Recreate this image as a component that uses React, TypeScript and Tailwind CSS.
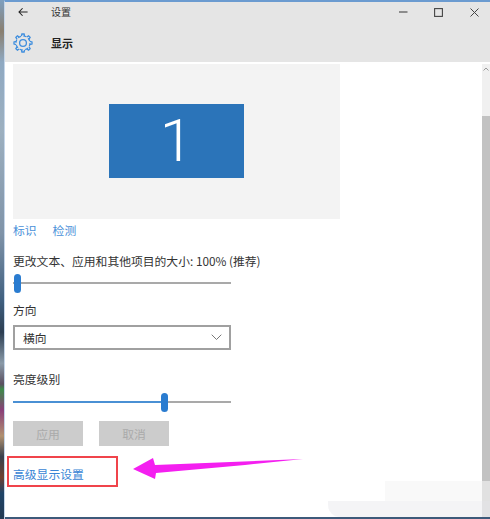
import React from "react";

const font = { fontFamily: '"Noto Sans CJK SC","Liberation Sans",sans-serif' };

function Gear() {
  const teeth = [0, 45, 90, 135, 180, 225, 270, 315];
  return (
    <svg width="20" height="20" viewBox="0 0 20 20" fill="none" stroke="#3f8ede" strokeWidth="1.3">
      <circle cx="10" cy="10" r="3.4" />
      <circle cx="10" cy="10" r="7" strokeDasharray="3.2 2.3" strokeWidth="1.2" />
      {teeth.map((a) => (
        <path key={a} d="M8.4 3.2 L8.9 1 H11.1 L11.6 3.2" transform={`rotate(${a} 10 10)`} />
      ))}
    </svg>
  );
}

function Slider({ pct, active }: { pct: number; active?: boolean }) {
  return (
    <div className="relative h-[18px] w-[218px] flex items-center">
      <div className="h-[2px] w-full bg-[#a9a9a9]" />
      {active && <div className="absolute left-0 h-[2px] bg-[#4a90d4]" style={{ width: `${pct}%` }} />}
      <div
        className="absolute h-[19px] w-[7px] rounded-full bg-[#2a7cd0]"
        style={{ left: `${pct}%`, marginLeft: active ? -3 : 1 }}
      />
    </div>
  );
}

export default function App() {
  return (
    <div className="relative h-[519px] w-[490px] overflow-hidden bg-white flex" style={font}>
      <div className="w-[4px] shrink-0 bg-[linear-gradient(180deg,#7fa0c0_0%,#8a7f70_6%,#8fa9c2_12%,#9db0c0_25%,#7f93a8_45%,#3f5f7f_58%,#2c3e52_64%,#8a9aa8_70%,#5a4f60_74%,#3d8a4a_75%,#8a3f78_79%,#b09070_84%,#38404c_88%,#704030_92%,#1f4468_95%,#233a52_100%)]" />
      <div className="flex-1 min-w-0 flex flex-col border-l border-[#c5d6ea] border-t-2 border-t-[#6b9bd0]">
        <header className="h-[60px] shrink-0 bg-[#e5e5e5] flex flex-col">
          <div className="h-[20px] flex items-center text-[#333]">
            <svg className="ml-[13px]" width="10" height="10" viewBox="0 0 12 12" fill="none" stroke="#222" strokeWidth="1.3">
              <path d="M11.5 6H1.2M5.5 1.5 1.2 6l4.3 4.5" />
            </svg>
            <span className="ml-[23px] text-[10px] leading-none">设置</span>
            <div className="ml-auto flex items-center">
              <svg width="10" height="10" viewBox="0 0 10 10" stroke="#444" strokeWidth="1.1"><path d="M1 5h8.5" /></svg>
              <svg className="ml-[26px]" width="9" height="9" viewBox="0 0 9 9" fill="none" stroke="#444" strokeWidth="1.1"><rect x=".6" y=".6" width="7.8" height="7.8" /></svg>
              <svg className="ml-[27px] mr-[11px]" width="9" height="9" viewBox="0 0 9 9" stroke="#444" strokeWidth="1"><path d="M.5.5l8 8M8.5.5l-8 8" /></svg>
            </div>
          </div>
          <div className="flex items-center h-[40px] pt-[2px]">
            <div className="ml-[8px]"><Gear /></div>
            <span className="ml-[18px] text-[11px] font-bold leading-none text-[#222]">显示</span>
          </div>
        </header>
        <div className="h-[2px] bg-white" />
        <div className="relative flex-1 flex flex-col pl-[8px]">
          <div className="h-[155px] w-[327px] bg-[#f3f3f3] flex items-start pt-[40px] pl-[96px]">
            <div className="h-[74px] w-[135px] bg-[#2b74b9] flex items-center justify-center text-[60px] leading-none text-white" style={{ fontFamily: 'Roboto,sans-serif', fontWeight: 300 }}>1</div>
          </div>
          <div className="mt-[2px] flex gap-[16px] text-[11.8px] leading-[18px] text-[#4a90d9]">
            <span>标识</span>
            <span>检测</span>
          </div>
          <div className="mt-[14px] text-[11.8px] leading-[16px] text-[#333] whitespace-nowrap">更改文本、应用和其他项目的大小: 100% (推荐)</div>
          <div className="mt-[5px]"><Slider pct={0} /></div>
          <div className="mt-[10px] text-[11.8px] leading-[16px] text-[#333]">方向</div>
          <div className="mt-[7px] h-[25px] w-[218px] border-2 border-[#a0a0a0] flex items-center pl-[8px] pr-[7px] text-[11.8px] text-[#333]">
            <span>横向</span>
            <svg className="ml-auto" width="11" height="7" viewBox="0 0 11 7" fill="none" stroke="#777" strokeWidth="1"><path d="M.7.7 5.5 5.5 10.3.7" /></svg>
          </div>
          <div className="mt-[21px] text-[11.8px] leading-[16px] text-[#333]">亮度级别</div>
          <div className="mt-[6px]"><Slider pct={69.3} active /></div>
          <div className="mt-[10px] flex gap-[16px]">
            <div className="h-[25px] w-[70px] bg-[#cccccc] flex items-center justify-center text-[11.8px] text-[#aaa]">应用</div>
            <div className="h-[25px] w-[70px] bg-[#cccccc] flex items-center justify-center text-[11.8px] text-[#aaa]">取消</div>
          </div>
          <div className="mt-[19px] text-[11.8px] leading-[18px] text-[#3a85d5]">高级显示设置</div>

          <div className="absolute left-[2px] top-[392px] h-[31px] w-[111px] border-2 border-[#f0444b]" />
          <svg className="absolute left-[128px] top-[392px]" width="172" height="26" viewBox="0 0 172 26">
            <path d="M0 13 L20 2 L22 9 L170 3 L112 9 L23 17 L22 23 Z" fill="#f41ff0" />
          </svg>
          <div className="absolute right-0 top-0 bottom-0 w-[8px] bg-[#f0f0f0]">
            <svg className="absolute left-[1px] top-[3px]" width="6" height="4" viewBox="0 0 6 4" fill="none" stroke="#999"><path d="M.5 3.5 3 1l2.5 2.5" /></svg>
            <div className="absolute left-0 right-0 top-[52px] bottom-0 bg-[#c2c2c2]" />
          </div>
          <div className="absolute right-0 bottom-[16px] h-[20px] w-[105px] bg-[#f5f5f5]/60" />
          <div className="absolute right-0 bottom-0 h-[16px] w-[162px] rounded-bl-[12px] bg-[#eff0f2]/70" />
        </div>
        <div className="h-[2px] shrink-0 bg-[#3d5a7a]" />
      </div>
    </div>
  );
}
